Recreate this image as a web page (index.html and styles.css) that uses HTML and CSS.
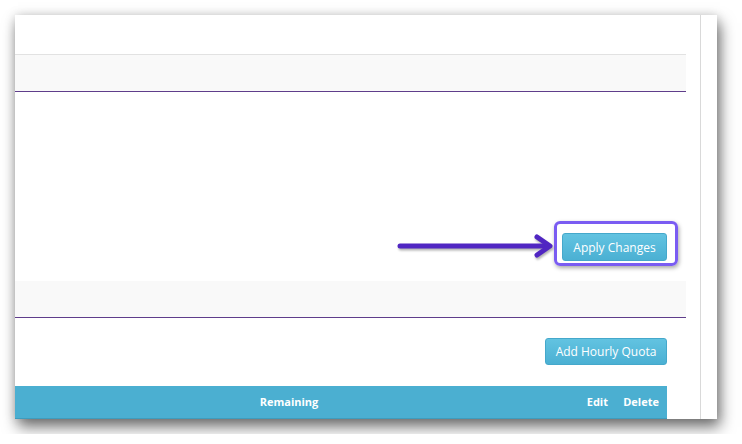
FILE: index.html
```html
<!DOCTYPE html>
<html lang="en">
<head>
    <meta charset="UTF-8">
    <meta name="viewport" content="width=device-width, initial-scale=1.0">
    <title>Hourly Quotas</title>
    <link rel="stylesheet" href="styles.css">
</head>
<body>
    <div class="window">
        <div class="page">
            <div class="section-head first"></div>

            <!-- Settings form footer -->
            <div class="form-actions">
                <button class="btn btn-info">Apply Changes</button>
            </div>

            <div class="section-head"></div>

            <div class="toolbar">
                <button class="btn btn-info">Add Hourly Quota</button>
            </div>

            <table class="quota-table">
                <thead>
                    <tr>
                        <th class="col-remaining">Remaining</th>
                        <th class="col-edit">Edit</th>
                        <th class="col-delete">Delete</th>
                    </tr>
                </thead>
            </table>

            <!-- Callout pointing at the save button -->
            <div class="callout-box"></div>
            <svg class="callout-arrow" width="170" height="30" viewBox="0 0 170 30">
                <g fill="none" stroke="#5026c2" stroke-width="5" stroke-linecap="round" stroke-linejoin="round">
                    <line x1="5" y1="14" x2="153" y2="14"/>
                    <polyline points="142,5 155,14 142,23"/>
                </g>
            </svg>
        </div>
        <div class="gutter"></div>
    </div>
</body>
</html>
```

FILE: styles.css
```css
* {
    margin: 0;
    padding: 0;
    box-sizing: border-box;
}

body {
    font-family: "Open Sans", Arial, sans-serif;
    background: #fff;
    color: #333;
}

.window {
    display: flex;
    width: 702px;
    height: 404px;
    margin: 15px;
    background: #fff;
    overflow: hidden;
    box-shadow: 3px 8px 14px rgba(0, 0, 0, 0.55), 0 0 10px rgba(0, 0, 0, 0.15);
}

.page {
    position: relative;
    width: 686px;
    padding-right: 14px;
    border-right: 1px solid #d9d9d9;
}

.gutter {
    flex: 1;
}

.section-head {
    height: 37px;
    background: #f9f9f9;
    border-bottom: 1px solid #5f3d8b;
}

.section-head.first {
    height: 38px;
    margin-top: 39px;
    border-top: 1px solid #e2e2e2;
}

.form-actions {
    display: flex;
    justify-content: flex-end;
    height: 189px;
    padding: 141px 19px 0 0;
}

.toolbar {
    display: flex;
    justify-content: flex-end;
    height: 68px;
    padding: 20px 19px 0 0;
}

.btn {
    font-family: inherit;
    font-size: 12px;
    color: #fff;
    border: 1px solid #45a8cb;
    border-radius: 3px;
    background: linear-gradient(#62c3e1, #4bb0d3);
    cursor: pointer;
}

.form-actions .btn {
    width: 105px;
    height: 28px;
}

.toolbar .btn {
    width: 122px;
    height: 27px;
}

.quota-table {
    width: 652px;
    border-collapse: collapse;
}

.quota-table th {
    height: 32px;
    font-size: 11px;
    font-weight: bold;
    color: #fff;
    background: #4bafd1;
    border-bottom: 1px solid #3f9cbd;
    padding: 0;
}

.col-remaining {
    width: 548px;
    text-align: center;
}

.col-edit {
    text-align: right;
    padding-right: 7px !important;
}

.col-delete {
    width: 52px;
    text-align: right;
    padding-right: 8px !important;
}

.callout-box {
    position: absolute;
    left: 539px;
    top: 206px;
    width: 124px;
    height: 45px;
    border: 3px solid #7a5cf2;
    border-radius: 6px;
    box-shadow: 1px 2px 4px rgba(0, 0, 0, 0.35);
}

.callout-arrow {
    position: absolute;
    left: 380px;
    top: 217px;
    filter: drop-shadow(1px 2px 1px rgba(0, 0, 0, 0.3));
}
```
